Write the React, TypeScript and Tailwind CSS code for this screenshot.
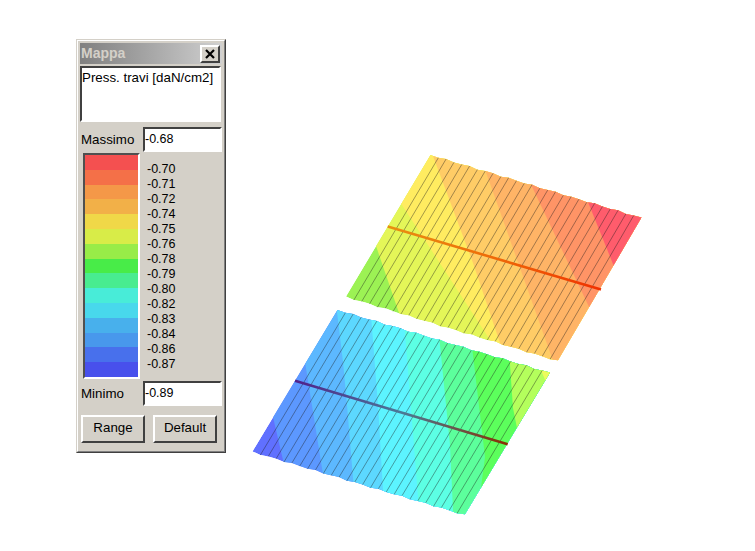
type Pt = [number, number];

const SCALE_COLORS = [
  'bg-[#f45050]',
  'bg-[#f47048]',
  'bg-[#f49848]',
  'bg-[#f2b048]',
  'bg-[#f0d848]',
  'bg-[#d8ec48]',
  'bg-[#98ec48]',
  'bg-[#48ec48]',
  'bg-[#48ec90]',
  'bg-[#48ecd8]',
  'bg-[#48d8ec]',
  'bg-[#48b0ec]',
  'bg-[#4898ec]',
  'bg-[#4870ec]',
  'bg-[#4850ec]',
];

const LABELS = ['-0.70', '-0.71', '-0.72', '-0.74', '-0.75', '-0.76', '-0.78', '-0.79', '-0.80', '-0.82', '-0.83', '-0.84', '-0.86', '-0.87'];

type Band = { color: string; line: Pt[] };

type Plate = {
  id: string;
  a: Pt; // top
  b: Pt; // right
  c: Pt; // bottom
  d: Pt; // left
  base: string;
  bands: Band[];
  beam: Pt[];
  beamStops: string[];
};

const PLATES: Plate[] = [
  {
    id: 'upper',
    a: [430.5, 155],
    b: [641.5, 218],
    c: [558, 361],
    d: [346, 297],
    base: '#9cf254',
    bands: [
      { color: '#e4f658', line: [[376.7, 248], [399, 313]] },
      { color: '#ffec60', line: [[402, 205], [490, 340]] },
      { color: '#ffcc66', line: [[433, 156], [473, 263], [500, 343]] },
      { color: '#ffb466', line: [[488, 178], [552, 358]] },
      { color: '#ff9466', line: [[535, 193], [590, 309]] },
      { color: '#ff5c6c', line: [[588, 202], [613, 264]] },
    ],
    beam: [[387.7, 226.5], [601, 289.5]],
    beamStops: ['#e89010', '#ef6a08', '#f03000'],
  },
  {
    id: 'lower',
    a: [337.5, 310],
    b: [550, 373],
    c: [465, 515],
    d: [252.5, 452],
    base: '#6070ff',
    bands: [
      { color: '#5c98ff', line: [[273, 417], [283, 460]] },
      { color: '#5cb8ff', line: [[305, 362], [322, 468]] },
      { color: '#5cd8ff', line: [[337, 312], [343, 362], [347, 405], [353, 478]] },
      { color: '#5cf4ff', line: [[372, 328], [378, 405], [383, 490]] },
      { color: '#5cffe4', line: [[405, 333], [418, 497]] },
      { color: '#5cff9c', line: [[440, 345], [450, 445], [453, 510]] },
      { color: '#5cff5c', line: [[473, 355], [485, 457], [482, 480]] },
      { color: '#b4ff5c', line: [[510, 365], [513, 408], [517, 428]] },
      { color: '#ecfc5c', line: [[540, 368], [546, 382]] },
    ],
    beam: [[295, 380.7], [507.7, 444.3]],
    beamStops: ['#50208c', '#4a7a98', '#8a3000'],
  },
];

const HATCH_COUNT = 27;

const lerp = (p: Pt, q: Pt, t: number): Pt => [p[0] + (q[0] - p[0]) * t, p[1] + (q[1] - p[1]) * t];

// the mesh edges are not perfectly straight in the picture
const wobble = (i: number) => Math.sin(i * 2.3) * 0.7;

const edgePoints = (plate: Plate): Pt[] => {
  const top: Pt[] = [];
  const bottom: Pt[] = [];
  for (let i = 0; i <= HATCH_COUNT; i++) {
    const t = i / HATCH_COUNT;
    const p = lerp(plate.a, plate.b, t);
    const q = lerp(plate.d, plate.c, t);
    top.push([p[0], p[1] + wobble(i)]);
    bottom.push([q[0], q[1] + wobble(i + 5)]);
  }
  return [...top, ...bottom.reverse()];
};

const toPoints = (pts: Pt[]) => pts.map((p) => p.join(',')).join(' ');

// region to the right of a band boundary, stretched past the plate
const bandPolygon = (line: Pt[]) => {
  const [p0, p1] = line;
  const q0 = line[line.length - 2];
  const q1 = line[line.length - 1];
  const up: Pt = lerp(p0, p1, (100 - p0[1]) / (p1[1] - p0[1]));
  const down: Pt = lerp(q0, q1, (560 - q0[1]) / (q1[1] - q0[1]));
  return toPoints([up, ...line, down, [800, 560], [800, 100]]);
};

const PlateDrawing = ({ plate }: { plate: Plate }) => {
  const outline = toPoints(edgePoints(plate));
  const [s, e] = plate.beam;
  return (
    <g>
      <defs>
        <clipPath id={`clip-${plate.id}`}>
          <polygon points={outline} />
        </clipPath>
        <linearGradient id={`beam-${plate.id}`} gradientUnits="userSpaceOnUse" x1={s[0]} y1={s[1]} x2={e[0]} y2={e[1]}>
          <stop offset="0" stopColor={plate.beamStops[0]} />
          <stop offset="0.5" stopColor={plate.beamStops[1]} />
          <stop offset="1" stopColor={plate.beamStops[2]} />
        </linearGradient>
      </defs>
      <g clipPath={`url(#clip-${plate.id})`}>
        <polygon points={outline} fill={plate.base} />
        {plate.bands.map((band) => (
          <polygon key={band.color} points={bandPolygon(band.line)} fill={band.color} />
        ))}
      </g>
      {Array.from({ length: HATCH_COUNT + 1 }, (_, i) => {
        const t = i / HATCH_COUNT;
        const p = lerp(plate.a, plate.b, t);
        const q = lerp(plate.d, plate.c, t);
        return (
          <line
            key={i}
            x1={p[0]}
            y1={p[1] + wobble(i)}
            x2={q[0]}
            y2={q[1] + wobble(i + 5)}
            stroke="#1a1a1a"
            strokeOpacity={i === 0 || i === HATCH_COUNT ? 0 : 0.58}
            strokeWidth={0.7}
          />
        );
      })}
      <line x1={s[0]} y1={s[1]} x2={e[0]} y2={e[1]} stroke={`url(#beam-${plate.id})`} strokeWidth={2.6} />
    </g>
  );
};

const sunken = 'border-2 border-t-[#404040] border-l-[#404040] border-r-white border-b-white';
const raised =
  'border-2 border-t-white border-l-white border-r-[#404040] border-b-[#404040] bg-[#d4d0c8] text-[13.33px] text-black';

const ValueRow = ({ label, value, className }: { label: string; value: string; className: string }) => (
  <div className={`flex h-[25px] items-center ${className}`}>
    <span className="ml-[1px] w-[62px]">{label}</span>
    <input
      readOnly
      value={value}
      className={`h-full w-[79px] bg-white pb-[2px] pl-0 text-[12.5px] text-black outline-none ${sunken}`}
    />
  </div>
);

export default function App() {
  return (
    <div className="flex h-[551px] w-[755px] items-start overflow-hidden bg-white [font-family:'Liberation_Sans',Arial,sans-serif] text-[13.33px] text-black">
      <div className="mt-[39px] ml-[76px] h-[414px] w-[150px] shrink-0 border border-t-[#d4d0c8] border-r-[#404040] border-b-[#404040] border-l-[#d4d0c8]">
        <div className="h-full border border-t-white border-r-[#808080] border-b-[#808080] border-l-white bg-[#d4d0c8] p-[2px]">
          <div className="flex h-[21px] items-center justify-between bg-gradient-to-r from-[#808080] to-[#d0d0d0] pr-[2px] pl-[1px]">
            <span className="text-[14px] font-bold text-[#d4d0c8]">Mappa</span>
            <button className={`flex h-[18px] w-[20px] items-center justify-center ${raised}`}>
              <svg width="10" height="10" viewBox="0 0 10 10">
                <path d="M1 1 L9 9 M9 1 L1 9" stroke="#000" strokeWidth="2.2" />
              </svg>
            </button>
          </div>
          <textarea
            readOnly
            value="Press. travi [daN/cm2]"
            className={`mt-[2px] block h-[56px] w-[141px] resize-none overflow-hidden bg-white pt-[2px] pl-0 text-[13.33px] leading-[15px] outline-none ${sunken}`}
          />
          <ValueRow label="Massimo" value="-0.68" className="mt-[5px]" />
          <div className="mt-[1px] flex h-[226px]">
            <div className="ml-[3px] flex w-[57px] flex-col border-2 border-t-[#505050] border-r-white border-b-white border-l-[#505050]">
              {SCALE_COLORS.map((color) => (
                <div key={color} className={`flex-1 ${color}`} />
              ))}
            </div>
            <div className="ml-[7px] flex flex-col pt-[9px] text-[12.5px]">
              {LABELS.map((label) => (
                <div key={label} className="h-[15px] leading-[15px]">
                  {label}
                </div>
              ))}
            </div>
          </div>
          <ValueRow label="Minimo" value="-0.89" className="mt-[2px]" />
          <div className="mt-[9px] flex gap-[8px] pl-[1px]">
            <button className={`h-[28px] w-[64px] pb-[2px] ${raised}`}>Range</button>
            <button className={`h-[28px] w-[64px] pb-[2px] ${raised}`}>Default</button>
          </div>
        </div>
      </div>
      <svg className="h-[551px] w-[529px] shrink-0" viewBox="226 0 529 551">
        {PLATES.map((plate) => (
          <PlateDrawing key={plate.id} plate={plate} />
        ))}
      </svg>
    </div>
  );
}
